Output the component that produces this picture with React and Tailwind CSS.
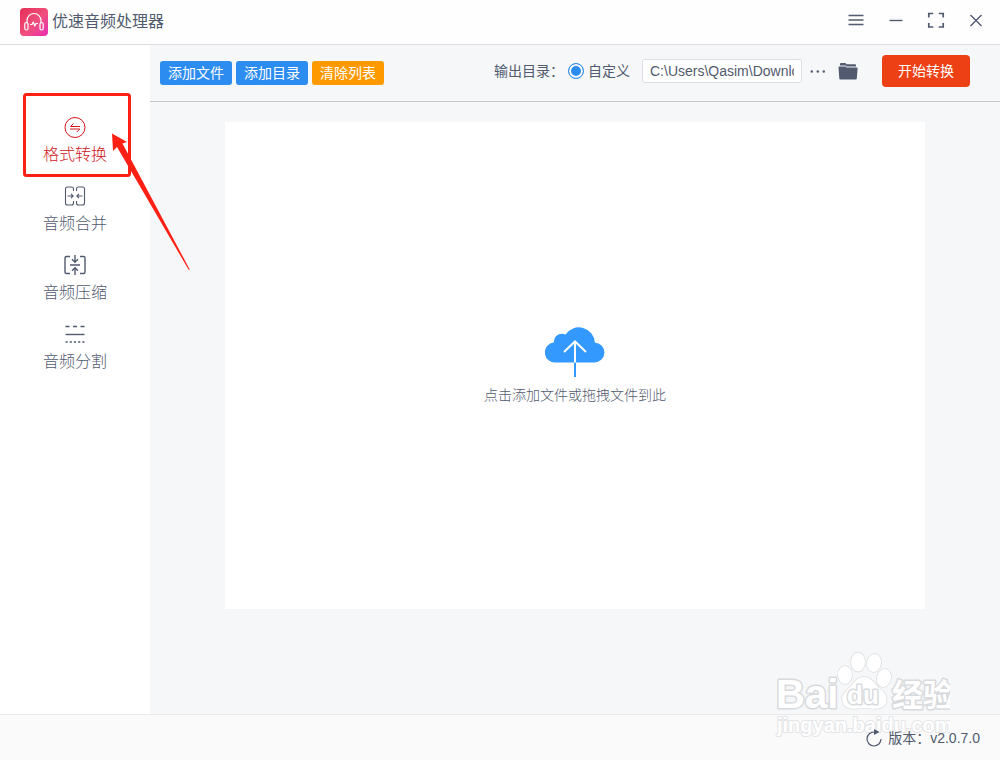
import { useState } from "react";

const MergeIcon = () => (
  <svg viewBox="0 0 24 24" className="w-6 h-6" fill="none" stroke="currentColor" strokeWidth="1.1">
    <path d="M10.5 7V5a2 2 0 0 0-2-2h-4a2 2 0 0 0-2 2v14a2 2 0 0 0 2 2h4a2 2 0 0 0 2-2v-2" />
    <path d="M13.5 7V5a2 2 0 0 1 2-2h4a2 2 0 0 1 2 2v14a2 2 0 0 1-2 2h-4a2 2 0 0 1-2-2v-2" />
    <path d="M4.5 12H10M8 9.8l2.2 2.2L8 14.2M19.5 12H14M16 9.8L13.8 12l2.2 2.2" />
  </svg>
);

const ConvertIcon = () => (
  <svg viewBox="0 0 24 24" className="w-6 h-6" fill="none" stroke="currentColor" strokeWidth="1">
    <circle cx="12" cy="12.5" r="10" />
    <path d="M7.5 11.5h9.5M7.5 11.5l3-3M16.8 14H7M16.8 14l-3 3" />
  </svg>
);

const CompressIcon = () => (
  <svg viewBox="0 0 24 24" className="w-6 h-6" fill="none" stroke="currentColor" strokeWidth="1.4">
    <path d="M7 3.5H3.5a1.5 1.5 0 0 0-1.5 1.5v14a1.500 1.500 0 0 0 1.500 1.500H7M17 3.500h3.500a1.500 1.500 0 0 1 1.500 1.500v14a1.500 1.500 0 0 1-1.500 1.500H17" />
    <path d="M7 12h10M12 2v7M9 6.200l3 3 3-3M12 22v-7M9 17.800l3-3 3 3" />
  </svg>
);

const SplitIcon = () => (
  <svg viewBox="0 0 24 24" className="w-6 h-6" fill="none" stroke="currentColor" strokeWidth="1.4">
    <path d="M2.500 4.500h19" strokeDasharray="4 3.500" />
    <path d="M2.500 12.500h19" />
    <path d="M2.500 20h19" strokeDasharray="2.200 2" />
  </svg>
);

const menu = [
  { key: "convert", label: "格式转换", Icon: ConvertIcon },
  { key: "merge", label: "音频合并", Icon: MergeIcon },
  { key: "compress", label: "音频压缩", Icon: CompressIcon },
  { key: "split", label: "音频分割", Icon: SplitIcon },
];

const Logo = () => (
  <svg viewBox="0 0 28 28" className="w-7 h-7" fill="none">
    <defs>
      <linearGradient id="logoBg" x1="0" y1="0" x2="1" y2="1">
        <stop offset="0" stopColor="#e52e55" />
        <stop offset="0.550" stopColor="#f0507f" />
        <stop offset="1" stopColor="#e92bb4" />
      </linearGradient>
    </defs>
    <rect width="28" height="28" rx="4" fill="url(#logoBg)" />
    <g stroke="#fff" strokeWidth="1.200" strokeLinecap="round" strokeLinejoin="round">
      <path d="M7 15v-2.500a7 7 0 0 1 14 0V15" />
      <rect x="4.800" y="14.500" width="3.200" height="7.500" rx="1.500" />
      <rect x="20" y="14.500" width="3.200" height="7.500" rx="1.500" />
      <path d="M10.500 16.500h1.500l1.300-2.500 1.500 4 1.200-2.500h1.500" />
    </g>
  </svg>
);

const Header = () => (
  <header className="flex items-center h-[45px] pl-5 pr-3 border-b border-[#dcdcde] bg-[#fefefe]">
    <Logo />
    <h1 className="ml-1 text-base leading-6">优速音频处理器</h1>
    <div className="flex items-center gap-4 ml-auto pb-1">
      <button aria-label="菜单" className="w-6 h-6">
        <svg viewBox="0 0 24 24" stroke="currentColor" strokeWidth="1.400">
          <path d="M4.500 7.500h15M4.500 12h15M4.500 16.500h15" />
        </svg>
      </button>
      <button aria-label="最小化" className="w-6 h-6">
        <svg viewBox="0 0 24 24" stroke="currentColor" strokeWidth="1.400">
          <path d="M5.500 12.500h13" />
        </svg>
      </button>
      <button aria-label="最大化" className="w-6 h-6">
        <svg viewBox="0 0 24 24" fill="none" stroke="currentColor" strokeWidth="1.700">
          <path d="M4.800 9.500V5.500h4.500M14.700 5.500h4.500v4M19.200 15v4h-4.500M9.300 19H4.800v-4" />
        </svg>
      </button>
      <button aria-label="关闭" className="w-6 h-6">
        <svg viewBox="0 0 24 24" stroke="currentColor" strokeWidth="1.400">
          <path d="M6.500 7l11 11M17.500 7l-11 11" />
        </svg>
      </button>
    </div>
  </header>
);

const Sidebar = ({ active, onSelect }) => (
  <aside className="relative w-[150px] shrink-0 bg-white pt-[61px]">
    <nav className="flex flex-col">
      {menu.map(({ key, label, Icon }) => (
        <button
          key={key}
          onClick={() => onSelect(key)}
          className={`flex flex-col items-center justify-center gap-1 h-[69px] text-base leading-6 font-light ${
            active === key ? "text-[#d0161b]" : "text-[#515a6e]"
          }`}
        >
          <Icon />
          <span>{label}</span>
        </button>
      ))}
    </nav>
    {/* highlight frame and pointer arrow, drawn over the menu */}
    <svg
      viewBox="0 0 200 240"
      className="absolute left-0 top-9 z-10 w-[200px] max-w-none h-[240px] pointer-events-none"
    >
      <rect x="24.500" y="13.500" width="105" height="81" rx="2" fill="none" stroke="#ff2015" strokeWidth="3" />
      <path d="M112 52.500L127 61 122.500 62.500 190 189 188.500 188.500 117 66 113 70Z" fill="#ff2015" />
    </svg>
  </aside>
);

const Toolbar = () => (
  <div className="flex items-center h-[57px] pl-[10px] pr-[30px] pb-1 border-b border-[#c5c8ce] text-sm">
    <div className="flex gap-1 pt-1 text-white leading-6">
      <button className="px-2 h-6 rounded-[3px] bg-[#2d8cf0]">添加文件</button>
      <button className="px-2 h-6 rounded-[3px] bg-[#2d8cf0]">添加目录</button>
      <button className="px-2 h-6 rounded-[3px] bg-[#ff9900]">清除列表</button>
    </div>
    <div className="flex items-center ml-auto">
      <span>输出目录：</span>
      <label className="flex items-center gap-1 ml-1">
        <input
          type="radio"
          name="output"
          defaultChecked
          className="appearance-none w-4 h-4 rounded-full border border-[#2d8cf0] bg-[#2d8cf0] shadow-[inset_0_0_0_2px_#fff]"
        />
        自定义
      </label>
      <input
        type="text"
        aria-label="输出目录"
        defaultValue="C:\Users\Qasim\Downloads"
        className="w-40 h-6 ml-3 px-[7px] rounded-[3px] border border-[#dcdee2] bg-white"
      />
      <button aria-label="更多" className="w-4 h-6 ml-2">
        <svg viewBox="0 0 16 24" fill="currentColor">
          <circle cx="1.800" cy="12.500" r="1.200" />
          <circle cx="7.800" cy="12.500" r="1.200" />
          <circle cx="13.800" cy="12.500" r="1.200" />
        </svg>
      </button>
      <button aria-label="打开文件夹" className="w-5 h-6 ml-3">
        <svg viewBox="0 0 20 24" fill="currentColor">
          <path d="M2 6.500V5q0-1 1-1h4.500l1 1.200H17q1 0 1 1v1.300H8.500L7.500 6.500Z" />
          <path d="M.500 8.200q0-.700.800-.700H7.500l1 1h10.200q1 0 .900 1L18.800 19.500q-.100 1-1 1H2.300q-.900 0-1-1Z" />
        </svg>
      </button>
      <button className="h-8 ml-6 px-4 rounded-[4px] bg-[#ed4014] text-white">开始转换</button>
    </div>
  </div>
);

const DropZone = () => (
  <button className="flex flex-col flex-1 items-center justify-center gap-2 mx-[75px] mt-5 mb-[105px] bg-white text-sm font-light">
    <svg viewBox="0 0 60 50" className="w-[60px] h-[50px]" fill="none">
      <path
        d="M11 35.500A10 10 0 0 1 9 15.300C9 8 15.500 5.500 20.500 7.500A16 16 0 0 1 49.800 15.500A10 10 0 0 1 49 35.500Z"
        fill="#3399ff"
      />
      <path d="M30 35.500V50" stroke="#3399ff" strokeWidth="2" />
      <path d="M30 35.500V14M19 25L30 14.500 41 25" stroke="#fff" strokeWidth="2" />
    </svg>
    <span>点击添加文件或拖拽文件到此</span>
  </button>
);

const Watermark = () => (
  <svg viewBox="0 0 190 92" className="absolute right-[50px] bottom-[18px] w-[190px] h-[92px] pointer-events-none">
    <g fill="#fff" stroke="#dcdee0" strokeWidth="1.500" paintOrder="stroke">
      <ellipse cx="25" cy="0" rx="0" ry="0" />
      <ellipse cx="85" cy="25" rx="7" ry="9" />
      <ellipse cx="98" cy="12" rx="7" ry="9.500" />
      <ellipse cx="114" cy="13" rx="7" ry="9" transform="rotate(10 114 13)" />
      <ellipse cx="124" cy="28" rx="7" ry="9" transform="rotate(15 124 28)" />
      <path d="M104 27C111 27 114 33 119 38C125 42 128 47 126 53C123 60 115 59 104 58C94 59 86 60 83 53C80 46 85 42 90 37C95 32 97 27 104 27Z" />
    </g>
    <g
      fill="#fff"
      stroke="#d8dadc"
      strokeWidth="3"
      paintOrder="stroke"
      strokeLinejoin="round"
      fontFamily="'Liberation Sans', 'Noto Sans CJK SC', sans-serif"
      fontWeight="700"
    >
      <text x="16" y="58" fontSize="40">Bai</text>
      <text x="87" y="54" fontSize="26">du</text>
      <text x="132" y="56" fontSize="31">经验</text>
      <text x="17" y="82" fontSize="20" stroke="#e4e5e7" strokeWidth="2">jingyan.baidu.com</text>
    </g>
  </svg>
);

const Footer = () => (
  <footer className="relative flex items-center justify-end gap-1 h-[46px] px-5 border-t border-[#e8eaec] bg-[#fafafa] text-sm">
    <Watermark />
    <svg viewBox="0 0 20 20" className="relative w-5 h-5" fill="none" stroke="currentColor" strokeWidth="1.200">
      <path d="M10.500 4A7 7 0 1 0 17 11" />
      <path d="M10 1l5.500 3L10 7Z" fill="currentColor" stroke="none" />
    </svg>
    <span className="relative">版本：v2.0.7.0</span>
  </footer>
);

const App = () => {
  const [active, setActive] = useState("convert");

  return (
    <div className="flex flex-col min-h-screen bg-[#f5f7f9] text-[#515a6e] font-['Liberation_Sans','Noto_Sans_CJK_SC',sans-serif]">
      <Header />
      <div className="flex flex-1">
        <Sidebar active={active} onSelect={setActive} />
        <main className="flex flex-col flex-1 min-w-0">
          <Toolbar />
          <DropZone />
        </main>
      </div>
      <Footer />
    </div>
  );
};

export default App;
